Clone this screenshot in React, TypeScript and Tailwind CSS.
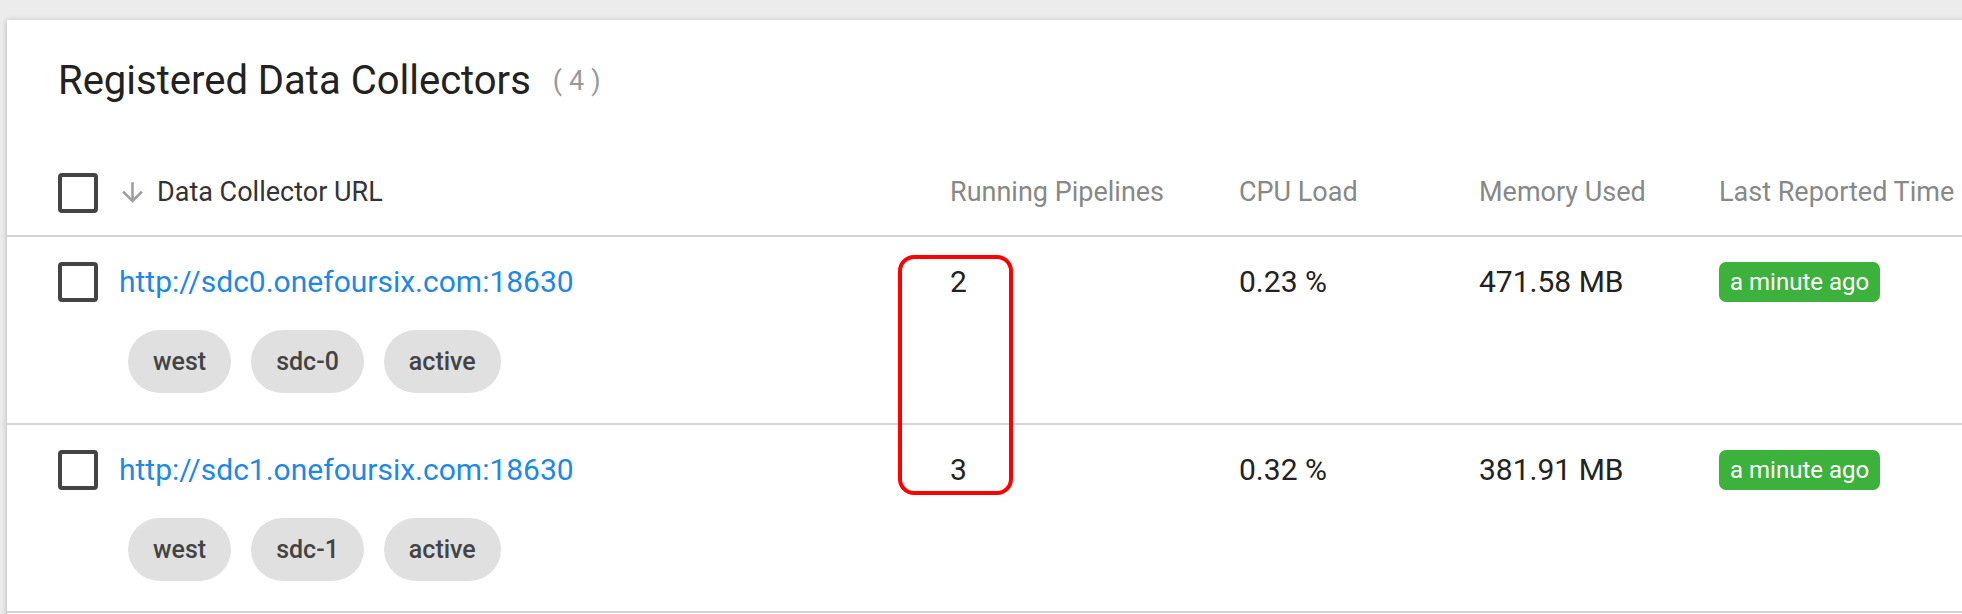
import React from "react"

type Collector = {
  url: string
  tags: string[]
  pipelines: number
  cpu: string
  memory: string
  reported: string
}

const collectors: Collector[] = [
  { url: "http://sdc0.onefoursix.com:18630", tags: ["west", "sdc-0", "active"], pipelines: 2, cpu: "0.23 %", memory: "471.58 MB", reported: "a minute ago" },
  { url: "http://sdc1.onefoursix.com:18630", tags: ["west", "sdc-1", "active"], pipelines: 3, cpu: "0.32 %", memory: "381.91 MB", reported: "a minute ago" },
]

function Checkbox() {
  return <div className="w-[40px] h-[40px] shrink-0 rounded-[4px] border-[4px] border-[#444]" />
}

function ArrowDown() {
  return (
    <svg width="31" height="31" viewBox="0 0 24 24" className="shrink-0">
      <path d="M20 12l-1.41-1.41L13 16.17V4h-2v12.17l-5.58-5.59L4 12l8 8 8-8z" fill="#9e9e9e" />
    </svg>
  )
}

const cols = "grid grid-cols-[892px_289px_240px_240px_1fr]"

export default function App() {
  return (
    <div className="relative w-[1962px] h-[614px] overflow-hidden bg-[#ececec] pt-[20px] pl-[7px] font-['Roboto',sans-serif]">
      <div className="w-[2000px] h-[620px] bg-white shadow-[0_1px_6px_rgba(0,0,0,0.25)] pl-[51px]">
        {/* title */}
        <div className="h-[130px] pb-[8px] flex items-center gap-[22px]">
          <h1 className="text-[40px] leading-none text-[#222]">Registered Data Collectors</h1>
          <span className="text-[27px] leading-none text-[#999] tracking-[7px]">(4)</span>
        </div>

        {/* table header */}
        <div className={`${cols} h-[87px] items-center border-b-2 border-[#d4d4d4] -ml-[51px] pl-[51px] text-[27px] leading-none`}>
          <div className="flex items-center">
            <Checkbox />
            <div className="ml-[19px] flex items-center gap-[9px]">
              <ArrowDown />
              <span className="text-[#333]">Data Collector URL</span>
            </div>
          </div>
          <div className="text-[#888]">Running Pipelines</div>
          <div className="text-[#888]">CPU Load</div>
          <div className="text-[#888]">Memory Used</div>
          <div className="text-[#888] whitespace-nowrap">Last Reported Time</div>
        </div>

        {/* rows */}
        {collectors.map((c) => (
          <div key={c.url} className={`${cols} h-[188px] items-start pt-[25px] border-b-2 border-[#d4d4d4] -ml-[51px] pl-[51px] text-[30px] leading-none text-[#222]`}>
            <div className="flex flex-col">
              <div className="h-[40px] flex items-center gap-[21px]">
                <Checkbox />
                <a className="text-[#1e88e5]">{c.url}</a>
              </div>
              <div className="mt-[28px] ml-[70px] flex gap-[20px]">
                {c.tags.map((t) => (
                  <span key={t} className="h-[63px] px-[25px] flex items-center rounded-full bg-[#e0e0e0] text-[25px] font-medium text-[#444]">
                    {t}
                  </span>
                ))}
              </div>
            </div>
            <div className="h-[40px] flex items-center">{c.pipelines}</div>
            <div className="h-[40px] flex items-center">{c.cpu}</div>
            <div className="h-[40px] flex items-center">{c.memory}</div>
            <div className="h-[40px] flex items-center">
              <span className="h-[40px] px-[11px] flex items-center rounded-[7px] bg-[#3cb13c] text-white text-[24px]">
                {c.reported}
              </span>
            </div>
          </div>
        ))}
      </div>

      {/* red highlight annotation */}
      <div className="absolute left-[898px] top-[255px] w-[115px] h-[240px] border-[4px] border-[#ff0000] rounded-[16px] pointer-events-none" />
    </div>
  )
}
